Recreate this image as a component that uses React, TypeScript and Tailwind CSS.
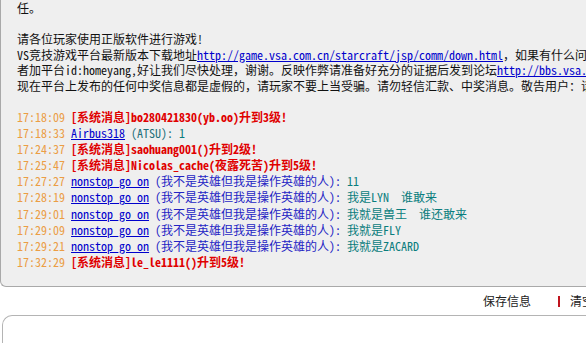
const font = "font-['Noto_Sans_Mono_CJK_SC','Noto_Sans_CJK_SC',monospace]";

type ChatLine =
  | { time: string; kind: 'sys'; text: string }
  | { time: string; kind: 'user'; name: string; tag: string; msg: string };

const lines: ChatLine[] = [
  { time: '17:18:09', kind: 'sys', text: '[系统消息]bo280421830(yb.oo)升到3级!' },
  { time: '17:18:33', kind: 'user', name: 'Airbus318', tag: '(ATSU):', msg: '1' },
  { time: '17:24:37', kind: 'sys', text: '[系统消息]saohuang001()升到2级!' },
  { time: '17:25:47', kind: 'sys', text: '[系统消息]Nicolas_cache(夜露死苦)升到5级!' },
  { time: '17:27:27', kind: 'user', name: 'nonstop_go_on', tag: '(我不是英雄但我是操作英雄的人):', msg: '11' },
  { time: '17:28:19', kind: 'user', name: 'nonstop_go_on', tag: '(我不是英雄但我是操作英雄的人):', msg: '我是LYN  谁敢来' },
  { time: '17:29:01', kind: 'user', name: 'nonstop_go_on', tag: '(我不是英雄但我是操作英雄的人):', msg: '我就是兽王  谁还敢来' },
  { time: '17:29:09', kind: 'user', name: 'nonstop_go_on', tag: '(我不是英雄但我是操作英雄的人):', msg: '我就是FLY' },
  { time: '17:29:21', kind: 'user', name: 'nonstop_go_on', tag: '(我不是英雄但我是操作英雄的人):', msg: '我就是ZACARD' },
  { time: '17:32:29', kind: 'sys', text: '[系统消息]le_le1111()升到5级!' },
];

function Line({ line }: { line: ChatLine }) {
  return (
    <div className="h-[16.1px] leading-[16.1px]">
      <span className="text-[#eb9d45]">{line.time} </span>
      {line.kind === 'sys' ? (
        <span className="font-bold text-[#e00000]">{line.text}</span>
      ) : (
        <>
          <span className="text-[#0000cc] underline">{line.name}</span>
          <span className={line.name === 'Airbus318' ? 'text-[#1f6f7a]' : 'text-[#2424c4]'}> {line.tag} </span>
          <span className="text-[#0a7d7d] whitespace-pre">{line.msg}</span>
        </>
      )}
    </div>
  );
}

export default function App() {
  return (
    <div className={`w-[586px] h-[343px] overflow-hidden bg-white text-[12px] ${font}`}>
      <div className="h-[287px] bg-[#efefef] border-l border-b border-[#a9a9a9] rounded-bl-[6px] overflow-hidden">
        <div className="pl-[16px] whitespace-nowrap leading-[15.5px] text-[#111]">
          <div>任。</div>
          <div>&nbsp;</div>
          <div>请各位玩家使用正版软件进行游戏!</div>
          <div>
            VS竞技游戏平台最新版本下载地址
            <span className="text-[#0000cc] underline">http://game.vsa.com.cn/starcraft/jsp/comm/down.html</span>
            ，如果有什么问题请联系管理员或
          </div>
          <div>
            者加平台id:homeyang,好让我们尽快处理，谢谢。反映作弊请准备好充分的证据后发到论坛
            <span className="text-[#0000cc] underline">http://bbs.vsa.com.cn</span>
          </div>
          <div>现在平台上发布的任何中奖信息都是虚假的，请玩家不要上当受骗。请勿轻信汇款、中奖消息。敬告用户：请勿</div>
        </div>
        <div className="pl-[16px] mt-[16px] whitespace-nowrap">
          {lines.map((l, i) => (
            <Line key={i} line={l} />
          ))}
        </div>
      </div>
      <div className="h-[28px] flex items-center pl-[483px] whitespace-nowrap text-[#222] font-['Noto_Sans_CJK_SC',sans-serif]">
        <span className="shrink-0">保存信息</span>
        <span className="shrink-0 ml-[27px] w-[2px] h-[11px] bg-[#c0141e]"></span>
        <span className="shrink-0 ml-[10px]">清空信息</span>
      </div>
      <div className="ml-[2px] h-[40px] border-t border-l border-[#b4b4b4] rounded-tl-[10px] bg-white"></div>
    </div>
  );
}
